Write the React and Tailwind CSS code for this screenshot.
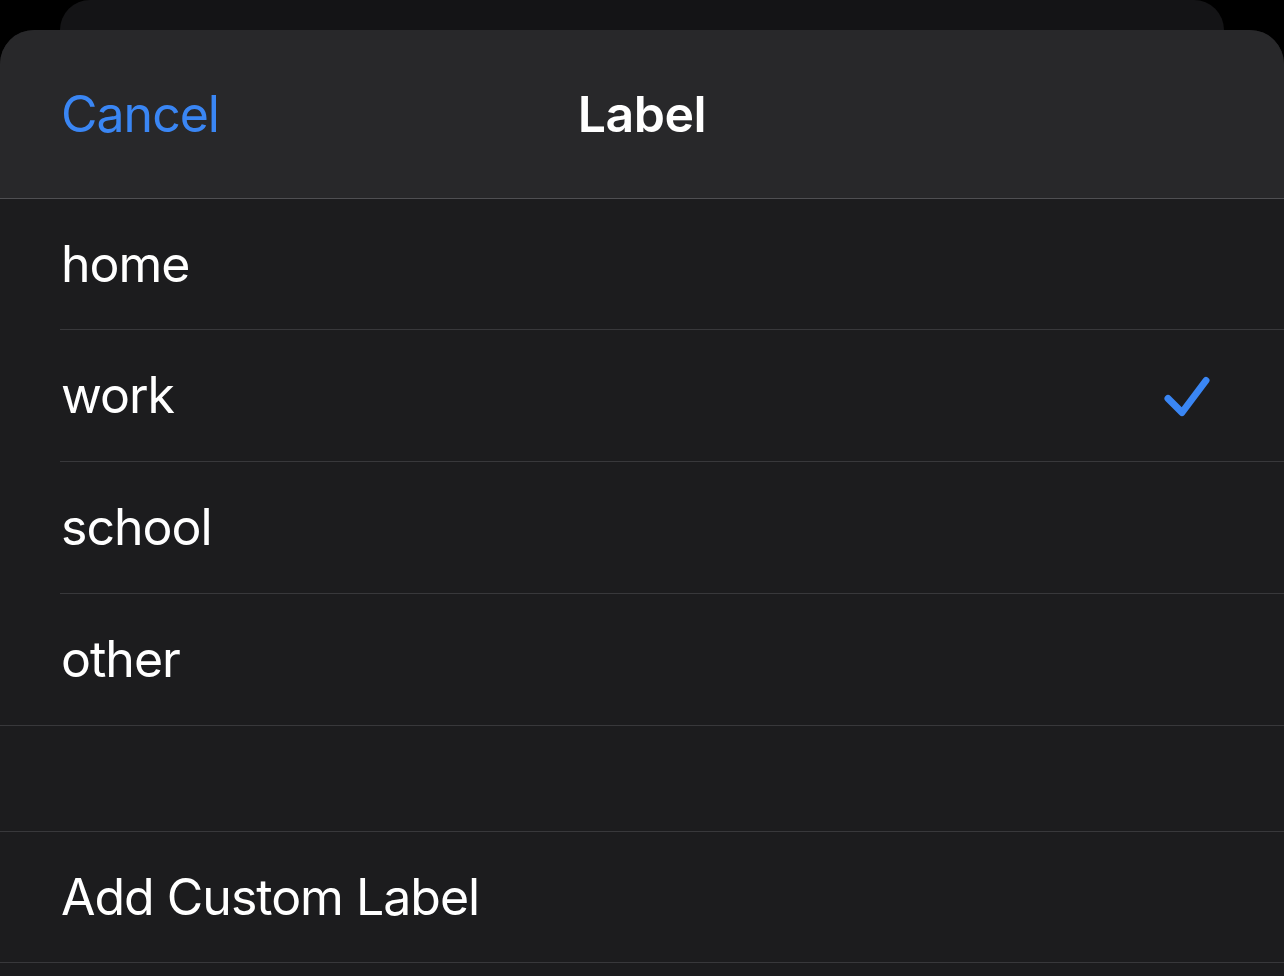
import React from "react";

const options = ["home", "work", "school", "other"];

function Check() {
  return (
    <svg width="50" height="50" viewBox="0 0 50 50" className="mr-[74px]">
      <path
        d="M8 27.5 L22 41.5 L46 9.5"
        fill="none"
        stroke="#3a86f4"
        strokeWidth="7"
        strokeLinecap="round"
        strokeLinejoin="round"
      />
    </svg>
  );
}

export default function App() {
  const selected = "work";

  return (
    <div
      className="h-[976px] w-full bg-black overflow-hidden flex flex-col"
      style={{ fontFamily: "Inter, 'Noto Sans', sans-serif" }}
    >
      {/* card behind the sheet */}
      <div className="mx-[60px] h-[30px] shrink-0 rounded-t-[30px] bg-[#141416]" />

      {/* sheet */}
      <div className="flex-1 rounded-t-[34px] bg-[#1c1c1e] overflow-hidden">
        <div className="h-[169px] bg-[#28282a] border-b border-[#4f4f52] grid grid-cols-[1fr_auto_1fr] items-center px-[61px]">
          <span className="text-[50px] text-[#3a86f4] tracking-[-1px]">Cancel</span>
          <span className="text-[50px] font-semibold text-white tracking-[-0.5px]">Label</span>
          <span />
        </div>

        {options.map((opt, i) => {
          const last = i === options.length - 1;
          const height = i === 0 ? "h-[131px]" : "h-[132px]";
          return (
            <div
              key={opt}
              className={
                last
                  ? height + " pl-[60px] border-b border-[#38383b]"
                  : height + " pl-[60px]"
              }
            >
              <div
                className={
                  last
                    ? "h-full flex items-center justify-between"
                    : "h-full flex items-center justify-between border-b border-[#38383b]"
                }
              >
                <span className="pl-[1px] text-[50px] text-white tracking-[-1px]">{opt}</span>
                {opt === selected && <Check />}
              </div>
            </div>
          );
        })}

        <div className="h-[106px] border-b border-[#38383b]" />

        <div className="h-[131px] pl-[61px] flex items-center border-b border-[#38383b]">
          <span className="text-[50px] text-white tracking-[-1px]">Add Custom Label</span>
        </div>
      </div>
    </div>
  );
}
